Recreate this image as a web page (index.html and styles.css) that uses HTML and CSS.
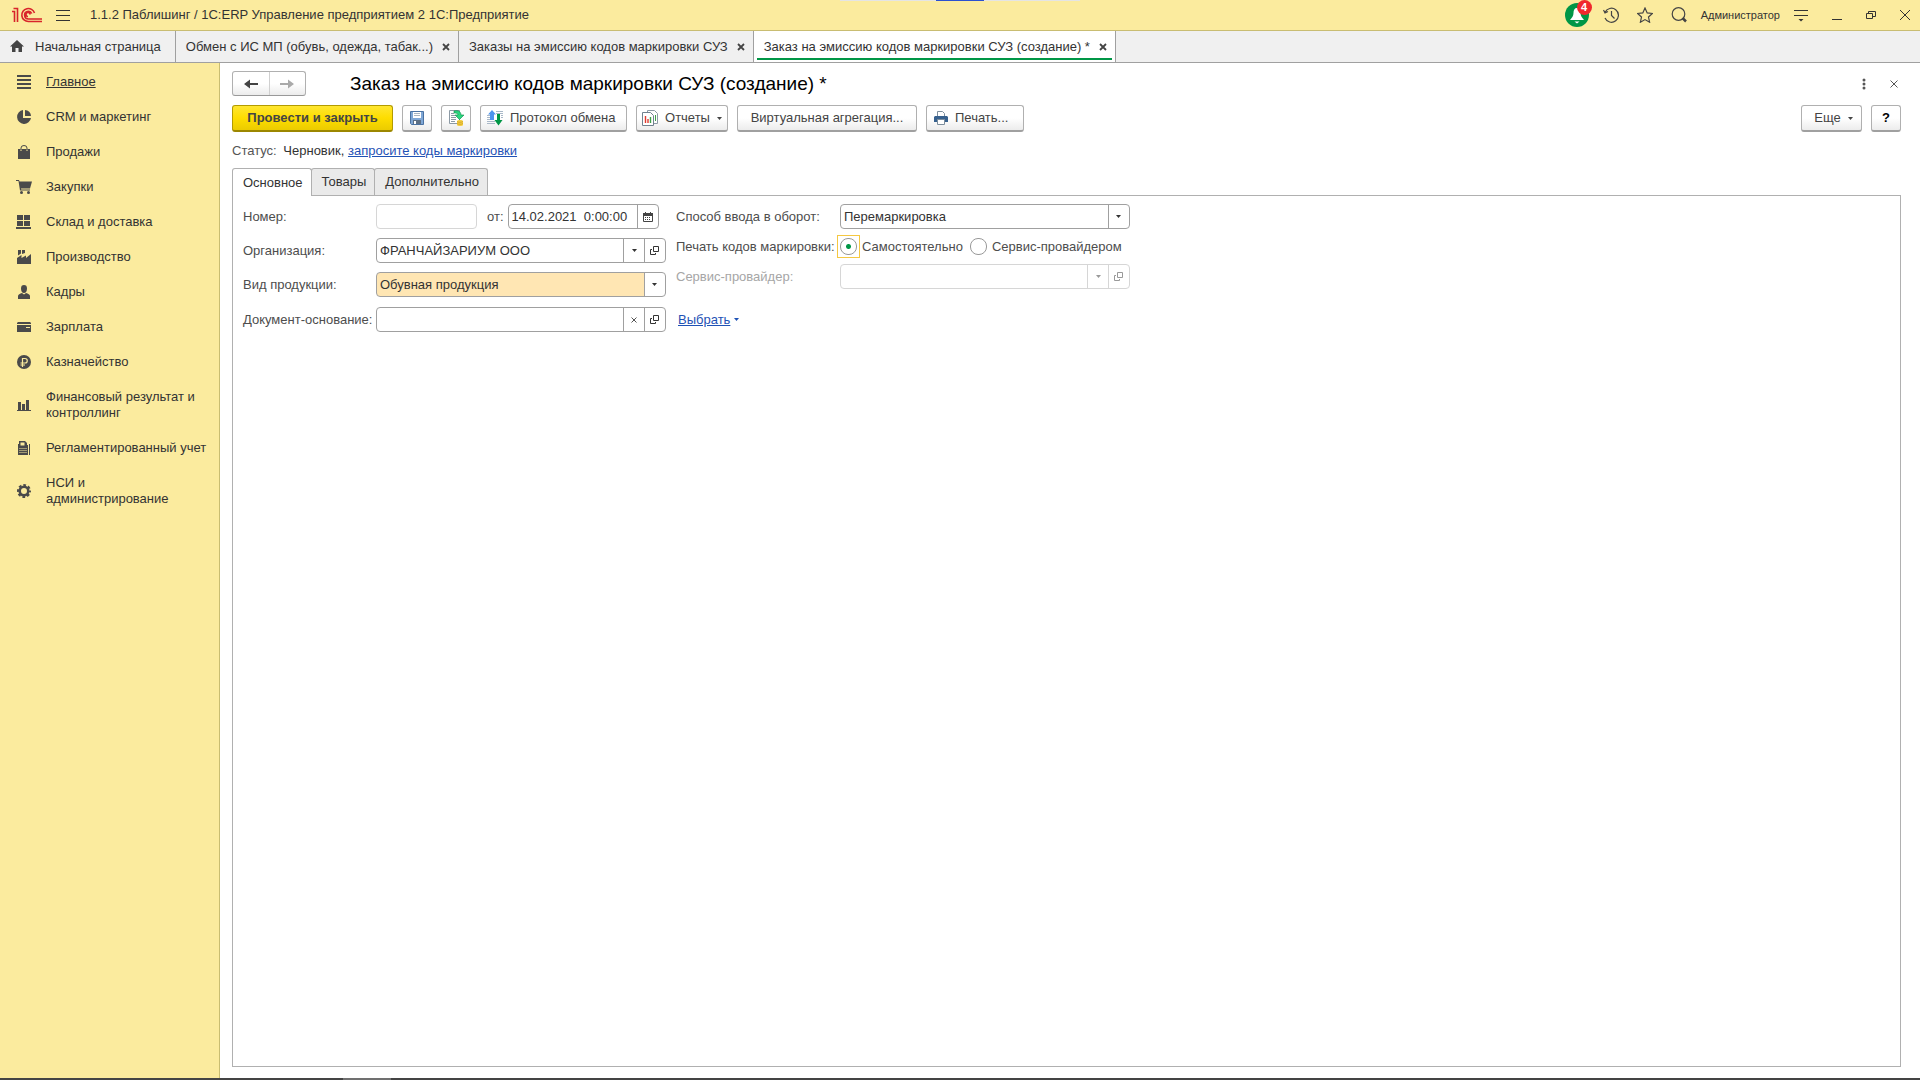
FILE: index.html
```
<!DOCTYPE html>
<html lang="ru">
<head>
    <meta charset="UTF-8">
    <title>Заказ на эмиссию кодов маркировки СУЗ (создание) *</title>
    <link rel="stylesheet" href="styles.css">
</head>
<body>

<svg class="sprite" aria-hidden="true">
    <symbol id="i-x" viewBox="0 0 10 10"><path d="M2 2l6 6M8 2l-6 6" fill="none" stroke="currentColor" stroke-width="1.800"/></symbol>
    <symbol id="i-down" viewBox="0 0 5 3"><path d="M0 0h5L2.500 3z" fill="currentColor"/></symbol>
    <symbol id="i-open" viewBox="0 0 10 10"><path d="M3.500 .5h5v5h-5zM2 3.500H.5v5h5V7" fill="none" stroke="currentColor"/></symbol>
</svg>

<!-- шапка -->
<header class="header">
    <svg class="logo" viewBox="0 0 30 16"><path d="M0 4.500h2.500V15M1.500 1.500h4V15M22.500 6a6.500 6.500 0 1 0-6 8.500H30M19.800 6.500a3.800 3.800 0 1 0-3.500 5.500H30M18 7.500a2 2 0 1 0-2 2" fill="none" stroke="#d8242b" stroke-width="1.600"/></svg>
    <button class="icon-btn menu" aria-label="Меню"><svg width="14" height="13" viewBox="0 0 14 13"><path d="M0 1h14M0 6h14M0 11h14" stroke="#333" shape-rendering="crispEdges"/></svg></button>
    <span class="app-name">1.1.2 Паблишинг / 1С:ERP Управление предприятием 2 1С:Предприятие</span>
    <div class="header-tools">
        <button class="icon-btn bell" aria-label="Уведомления">
            <svg width="24" height="24" viewBox="0 0 24 24"><circle cx="12" cy="12" r="12" fill="#009646"/><path d="M12 5c-2.500 0-3.500 2-3.500 5 0 3-1.500 4.500-3.500 7h14c-2-2.500-3.500-4-3.500-7 0-3-1-5-3.500-5zM9.500 18.500h5L12 20.500z" fill="#fff"/></svg>
            <span class="badge">4</span>
        </button>
        <button class="icon-btn" aria-label="История"><svg width="16" height="16" viewBox="0 0 16 16"><path d="M2 5.500A7 7 0 1 1 2 11M8.500 4v4.500l3 3M.5 3l1.500 3 3-1.500" fill="none" stroke="#444" stroke-width="1.200"/></svg></button>
        <button class="icon-btn" aria-label="Избранное"><svg width="16" height="16" viewBox="0 0 16 16"><path d="M8 1l2.200 4.900 5.200.6-3.900 3.500 1.100 5.200L8 12.600l-4.600 2.600L4.500 10 .6 6.500l5.200-.6z" fill="none" stroke="#444" stroke-width="1.200"/></svg></button>
        <button class="icon-btn" aria-label="Поиск"><svg width="16" height="16" viewBox="0 0 16 16"><circle cx="7.500" cy="7" r="6.300" fill="none" stroke="#444" stroke-width="1.200"/><path d="M11.500 11l3.500 3.500" stroke="#444" stroke-width="2.500"/></svg></button>
        <a class="user" href="#">Администратор</a>
        <button class="icon-btn settings" aria-label="Сервис"><svg width="14" height="13" viewBox="0 0 14 13"><path d="M0 1h14M0 6h14" stroke="#333" shape-rendering="crispEdges"/><path d="M4.500 10h5L7 12.500z" fill="#333"/></svg></button>
        <button class="icon-btn win" aria-label="Свернуть"><svg width="10" height="10" viewBox="0 0 10 10"><path d="M0 9.500h10" stroke="#333"/></svg></button>
        <button class="icon-btn win" aria-label="Развернуть"><svg width="10" height="10" viewBox="0 0 10 10"><path d="M.5 3.500h6v5h-6zM2.500 3V1.500h7v5H7" fill="none" stroke="#333"/></svg></button>
        <button class="icon-btn win" aria-label="Закрыть"><svg width="10" height="10" viewBox="0 0 10 10"><path d="M0 0l10 10M10 0L0 10" stroke="#333"/></svg></button>
    </div>
    <div class="screen-bar"></div>
</header>

<!-- открытые окна -->
<nav class="windows">
    <a class="window home" href="#"><svg width="14" height="13" viewBox="0 0 14 13"><path d="M7 0l7 6.500h-2V12H8.500V8h-3v4H2V6.500H0z" fill="#444"/></svg>Начальная страница</a>
    <div class="window"><a href="#">Обмен с ИС МП (обувь, одежда, табак...)</a><button class="icon-btn close" aria-label="Закрыть"><svg width="10" height="10"><use href="#i-x"/></svg></button></div>
    <div class="window"><a href="#">Заказы на эмиссию кодов маркировки СУЗ</a><button class="icon-btn close" aria-label="Закрыть"><svg width="10" height="10"><use href="#i-x"/></svg></button></div>
    <div class="window current"><a href="#">Заказ на эмиссию кодов маркировки СУЗ (создание) *</a><button class="icon-btn close" aria-label="Закрыть"><svg width="10" height="10"><use href="#i-x"/></svg></button></div>
</nav>

<div class="workspace">
    <!-- разделы -->
    <nav class="sections">
        <a class="active" href="#"><svg viewBox="0 0 14 14"><path d="M0 0h14v2H0zM0 4h14v2H0zM0 8h14v2H0zM0 12h14v2H0z"/></svg><span>Главное</span></a>
        <a href="#"><svg viewBox="0 0 14 14"><path d="M6 0v8h8a7 7 0 1 1-8-8zM8 0a6 6 0 0 1 6 6H8z"/></svg><span>CRM и маркетинг</span></a>
        <a href="#"><svg viewBox="0 0 14 14"><path d="M1 4h2.500v2h1V4h5v2h1V4H13v10H1z"/><path d="M4 5V3a3 2.500 0 0 1 6 0v2" fill="none" stroke="#4a4a4a"/></svg><span>Продажи</span></a>
        <a href="#"><svg viewBox="0 0 14 14"><path d="M-1 0h3l.5 1.500H15L13 8.500H4l.2 1H13v1H3L1.500 1H-1z"/><circle cx="4.500" cy="12.500" r="1.500"/><circle cx="11.500" cy="12.500" r="1.500"/></svg><span>Закупки</span></a>
        <a href="#"><svg viewBox="0 0 14 14"><path d="M0 0h6v5H0zM7 0h6v5H7zM0 6h6v5H0zM7 6h6v5H7zM-1 12h15v2H-1z"/></svg><span>Склад и доставка</span></a>
        <a href="#"><svg viewBox="0 0 14 14"><path d="M0 14V8l4.500-3v3L9 5.500V8l5-4v10zM1 0h3v3.500L1 5.500zM5 0h3v3L5 4z"/></svg><span>Производство</span></a>
        <a href="#"><svg viewBox="0 0 14 14"><path d="M7 0c2 0 3 1 3 3.500S9 8 7 8 4 6 4 3.500 5 0 7 0zM1 14v-3c0-1.500 2-2.500 4-3l2 1.500L9 8c2 .5 4 1.500 4 3v3z"/></svg><span>Кадры</span></a>
        <a href="#"><svg viewBox="0 0 14 14"><path d="M1 2h12l1 1v1H0V3zM0 5h14v7H0z"/><path d="M9 7.500h4" stroke="#fbeb9e"/></svg><span>Зарплата</span></a>
        <a href="#"><svg viewBox="0 0 14 14"><circle cx="7" cy="7" r="7"/><path d="M5.500 12V3.500h2.500a2 2 0 0 1 0 4.500H3.500M3.500 10H8" fill="none" stroke="#fbeb9e" stroke-width="1.200"/></svg><span>Казначейство</span></a>
        <a href="#"><svg viewBox="0 0 14 14"><path d="M1 4h3v8h1V6h3v6h1V2h3v10h2v1H0v-1h1z"/></svg><span>Финансовый результат и контроллинг</span></a>
        <a href="#"><svg viewBox="0 0 14 14"><path d="M2 0h6l2 2v2h1v10H1V3h1zM12 3h1v11h-1z"/><path d="M3.500 1.500h4v3h-4z" fill="#fbeb9e"/><path d="M2.500 7.500h7M2.500 9.500h7M2.500 11.500h7" fill="none" stroke="#fbeb9e" stroke-dasharray="1 1"/></svg><span>Регламентированный учет</span></a>
        <a href="#"><svg viewBox="0 0 14 14"><circle cx="7" cy="7" r="4.300" fill="none" stroke="#4a4a4a" stroke-width="2.600"/><circle cx="7" cy="7" r="6" fill="none" stroke="#4a4a4a" stroke-width="2" stroke-dasharray="2.710 2" stroke-dashoffset="1.350"/></svg><span>НСИ и администрирование</span></a>
    </nav>

    <main class="form">
        <div class="form-head">
            <div class="history">
                <button aria-label="Назад"><svg width="14" height="10" viewBox="0 0 14 10"><path d="M14 4v2H6v3.500L0 5 6 .5V4z" fill="#444"/></svg></button>
                <button aria-label="Вперед" disabled><svg width="14" height="10" viewBox="0 0 14 10"><path d="M0 4v2h8v3.500L14 5 8 .5V4z" fill="#aaa"/></svg></button>
            </div>
            <h1>Заказ на эмиссию кодов маркировки СУЗ (создание) *</h1>
            <button class="icon-btn more" aria-label="Действия"><svg width="4" height="12" viewBox="0 0 4 12"><circle cx="2" cy="2" r="1.500" fill="#555"/><circle cx="2" cy="6" r="1.500" fill="#555"/><circle cx="2" cy="10" r="1.500" fill="#555"/></svg></button>
            <button class="icon-btn" aria-label="Закрыть"><svg width="8" height="8" viewBox="0 0 8 8"><path d="M.5 .5l7 7M7.500 .5l-7 7" stroke="#555"/></svg></button>
        </div>

        <div class="toolbar">
            <button class="btn btn-main">Провести и закрыть</button>
            <button class="btn btn-icon" aria-label="Записать"><svg width="16" height="16" viewBox="0 0 16 16"><path d="M1.500 1.500h13v13h-12l-1-1z" fill="#7fa7d6" stroke="#4a72a3"/><path d="M4 2h8v6H4z" fill="#fff"/><path d="M5 3.500h6M5 5.500h6" stroke="#a9b4c0"/><path d="M4 10h8v4H4z" fill="#5c6f85"/><path d="M5 11h2v3H5z" fill="#fff"/></svg></button>
            <button class="btn btn-icon" aria-label="Провести"><svg width="16" height="16" viewBox="0 0 16 16"><path d="M1.500 .5h10v13h-10z" fill="#fff" stroke="#8d9aa5"/><path d="M3 3.500h3M3 5.500h4M3 7.500h5M3 9.500h5M3 11.500h4" stroke="#8d9aa5"/><path d="M6 1c4-1 7 .5 7 4h3l-4.500 4.500L7 5h3c0-1.500-1-2-4-2z" fill="#2bd67f" stroke="#078c46" stroke-width=".6"/><path d="M9 11c0-1.500 6-1.500 6 0v4c0 1.300-6 1.300-6 0z" fill="#f5cf45"/><path d="M9 11.500c1 1 5 1 6 0M9 13.500c1 1 5 1 6 0" fill="none" stroke="#c79a18" stroke-width=".7"/></svg></button>
            <button class="btn btn-protocol"><svg width="16" height="16" viewBox="0 0 16 16"><path d="M0 5.500h3M0 7.500h3M0 9.500h3M0 11.500h8M0 13.500h8M9 1.500h7M9 3.500h7M14 5.500h2M14 7.500h2" stroke="#a9b8c8"/><path d="M5 0l4 4.500H7V10H3V4.500H1z" fill="#4d94ee"/><path d="M10 4h3v6h2.500l-4 5.500L7.500 10H10z" fill="#009646"/></svg>Протокол обмена</button>
            <button class="btn btn-reports"><svg width="16" height="16" viewBox="0 0 16 16"><path d="M5.500.5h7l3 3v10h-10z" fill="#fff" stroke="#8d9aa5"/><path d="M13.500 5v6" stroke="#3fa34a"/><path d="M.5 2.500h8l3 3v10H.5z" fill="#fff" stroke="#71818f"/><path d="M3.500 6v7M6 9v4" stroke="#e03a2f" stroke-width="1.400"/><path d="M8.500 7v6" stroke="#3fa34a" stroke-width="1.400"/></svg>Отчеты<svg class="arrow"><use href="#i-down"/></svg></button>
            <button class="btn btn-text">Виртуальная агрегация...</button>
            <button class="btn btn-print"><svg width="14" height="14" viewBox="0 0 14 14"><path d="M3.500 6V.5h5l2 2V6" fill="#fff" stroke="#7d8e9d"/><path d="M1 5h12l1 1v5H0V6z" fill="#37618e"/><path d="M3.500 8.500h7v5h-7z" fill="#fff" stroke="#7d8e9d"/></svg>Печать...</button>
            <button class="btn btn-else">Еще<svg class="arrow"><use href="#i-down"/></svg></button>
            <button class="btn btn-help">?</button>
        </div>

        <p class="status">Статус: <span>Черновик,</span> <a href="#">запросите коды маркировки</a></p>

        <div class="tabs" role="tablist">
            <button class="tab selected" role="tab" aria-selected="true">Основное</button>
            <button class="tab" role="tab">Товары</button>
            <button class="tab" role="tab">Дополнительно</button>
        </div>

        <div class="page">
            <div class="column">
                <div class="row">
                    <label for="number">Номер:</label>
                    <div class="field field-number disabled"><input id="number" type="text" disabled></div>
                    <label class="label-from" for="date">от:</label>
                    <div class="field field-date"><input id="date" type="text" value="14.02.2021  0:00:00"><button aria-label="Выбрать дату"><svg width="10" height="10" viewBox="0 0 10 10"><path d="M.5 1.500h9v8h-9z" fill="#fff" stroke="#444"/><path d="M0 1h2V0h1v1h4V0h1v1h2v3H0z" fill="#444"/><path d="M2 5.500h6M2 7.500h6" stroke="#444" stroke-dasharray="1 1"/></svg></button></div>
                </div>
                <div class="row">
                    <label for="org">Организация:</label>
                    <div class="field"><input id="org" type="text" value="ФРАНЧАЙЗАРИУМ ООО"><button aria-label="Список"><svg class="arrow"><use href="#i-down"/></svg></button><button aria-label="Открыть"><svg width="10" height="10"><use href="#i-open"/></svg></button></div>
                </div>
                <div class="row">
                    <label for="kind">Вид продукции:</label>
                    <div class="field field-select marked"><select id="kind"><option>Обувная продукция</option></select><svg class="arrow"><use href="#i-down"/></svg></div>
                </div>
                <div class="row row-base">
                    <label for="base">Документ-основание:</label>
                    <div class="field"><input id="base" type="text"><button aria-label="Очистить"><svg width="6" height="6" viewBox="0 0 6 6"><path d="M.5 .5l5 5M5.500 .5l-5 5" stroke="#555"/></svg></button><button aria-label="Открыть"><svg width="10" height="10"><use href="#i-open"/></svg></button></div>
                </div>
            </div>

            <div class="column column-right">
                <div class="row">
                    <label for="way">Способ ввода в оборот:</label>
                    <div class="field field-select"><select id="way"><option>Перемаркировка</option></select><svg class="arrow"><use href="#i-down"/></svg></div>
                </div>
                <div class="row row-radio" role="radiogroup" aria-labelledby="print-label">
                    <span class="caption" id="print-label">Печать кодов маркировки:</span>
                    <label class="radio focused"><input type="radio" name="print" checked><span>Самостоятельно</span></label>
                    <label class="radio"><input type="radio" name="print"><span>Сервис-провайдером</span></label>
                </div>
                <div class="row row-provider">
                    <label for="provider">Сервис-провайдер:</label>
                    <div class="field disabled"><input id="provider" type="text" disabled><button aria-label="Список" disabled><svg class="arrow"><use href="#i-down"/></svg></button><button aria-label="Открыть" disabled><svg width="10" height="10"><use href="#i-open"/></svg></button></div>
                </div>
                <div class="row row-choose">
                    <a class="choose" href="#">Выбрать</a><svg class="arrow"><use href="#i-down"/></svg>
                </div>
            </div>
        </div>
    </main>
</div>

<footer class="taskbar"><span></span></footer>

</body>
</html>
```

FILE: styles.css
```
* {
    box-sizing: border-box;
}

body {
    display: flex;
    flex-direction: column;
    min-height: 100vh;
    margin: 0;
    font: 13px/16px "Liberation Sans", Arial, sans-serif;
    color: #333;
    background-color: #fff;
}

button, input, select {
    font: inherit;
    color: inherit;
}

a {
    color: inherit;
    text-decoration: none;
}

svg {
    flex: none;
    display: block;
}

.sprite {
    position: absolute;
    width: 0;
    height: 0;
}

.arrow {
    width: 5px;
    height: 3px;
}

.icon-btn {
    display: flex;
    align-items: center;
    justify-content: center;
    padding: 0;
    border: none;
    background: none;
}

/* шапка */
.header {
    position: relative;
    display: flex;
    align-items: center;
    height: 31px;
    padding: 0 10px 0 12px;
    background-color: #fbeb9e;
    border-bottom: 1px solid #c9bd72;
}

.logo {
    width: 30px;
    height: 16px;
}

.menu {
    margin: 0 20px 0 14px;
}

.header-tools {
    display: flex;
    align-items: center;
    gap: 18px;
    margin-left: auto;
}

.bell {
    position: relative;
    margin-right: -4px;
}

.badge {
    position: absolute;
    top: -3px;
    right: -3px;
    width: 15px;
    height: 15px;
    border-radius: 8px;
    font-size: 11px;
    font-weight: bold;
    line-height: 15px;
    color: #fff;
    background-color: #f0282d;
}

.user {
    margin: 0 -4px;
    font-size: 11px;
}

.win {
    width: 10px;
    margin-left: 6px;
}

.screen-bar {
    position: absolute;
    top: 0;
    left: 840px;
    width: 240px;
    height: 1px;
    background: linear-gradient(to right, #e4e4e4 96px, #2b50d0 96px, #2b50d0 144px, #e4e4e4 144px);
}

/* открытые окна */
.windows {
    display: flex;
    height: 32px;
    background-color: #f0f0f0;
    border-bottom: 1px solid #a0a0a0;
}

.window {
    display: flex;
    align-items: center;
    gap: 8px;
    padding: 0 7px 0 10px;
    border-right: 1px solid #a0a0a0;
}

.home {
    gap: 11px;
    padding-right: 14px;
}

.close {
    color: #444;
}

.current {
    background: linear-gradient(#009646, #009646) center bottom 2px / calc(100% - 6px) 2px no-repeat #fff;
}

/* разделы */
.workspace {
    display: flex;
    flex: 1;
}

.sections {
    width: 220px;
    padding-top: 1px;
    background-color: #fbeb9e;
    border-right: 1px solid #c9bd72;
}

.sections a {
    display: flex;
    align-items: center;
    gap: 15px;
    padding: 10px 8px 9px 17px;
}

.sections svg {
    width: 14px;
    height: 14px;
    overflow: visible;
    fill: #4a4a4a;
}

.active span {
    text-decoration: underline;
}

/* форма */
.form {
    display: flex;
    flex: 1;
    flex-direction: column;
    padding: 8px 19px 11px 12px;
}

.form-head {
    display: flex;
    align-items: center;
    gap: 24px;
    height: 25px;
    padding-right: 3px;
}

.history {
    display: flex;
    width: 74px;
    height: 25px;
    border: 1px solid #b0b0b0;
    border-bottom-color: #999;
    border-radius: 3px;
    background: linear-gradient(#fff 50%, #ececec);
}

.history button {
    display: flex;
    flex: 1;
    align-items: center;
    justify-content: center;
    padding: 0;
    border: none;
    background: none;
}

.history button + button {
    border-left: 1px solid #d0d0d0;
}

h1 {
    flex: 1;
    margin: 0;
    padding-left: 20px;
    font-size: 19px;
    font-weight: normal;
    line-height: 22px;
    color: #000;
}

.toolbar {
    display: flex;
    gap: 9px;
    margin-top: 9px;
}

.btn {
    display: flex;
    align-items: center;
    justify-content: center;
    gap: 7px;
    height: 27px;
    padding: 0 12px;
    border: 1px solid #b0b0b0;
    border-bottom: 2px solid #a0a0a0;
    border-radius: 3px;
    color: #444;
    background: linear-gradient(#fff 50%, #ececec);
}

.btn-main {
    width: 161px;
    font-weight: bold;
    border-color: #b39b00;
    border-bottom-color: #9c8700;
    background: linear-gradient(#ffe631, #fedd00 50%, #ebcb00);
}

.btn-icon, .btn-help {
    width: 30px;
    padding: 0;
}

.btn-protocol {
    justify-content: flex-start;
    width: 147px;
    padding: 0 6px;
}

.btn-reports {
    width: 92px;
    padding: 0;
}

.btn-text {
    width: 180px;
}

.btn-print {
    justify-content: flex-start;
    width: 98px;
    padding: 0 7px;
}

.btn-else {
    width: 61px;
    padding-right: 8px;
    margin-left: auto;
}

.btn-help {
    font-weight: bold;
    color: #000;
}

.status {
    margin: 11px 0 9px;
    color: #555;
}

.status span {
    margin-left: 3px;
    color: #333;
}

.status a, .choose {
    color: #1f52b5;
    text-decoration: underline;
}

/* закладки */
.tabs {
    display: flex;
    height: 27px;
}

.tab {
    padding: 0 8px 0 10px;
    margin-right: -1px;
    border: 1px solid #b0b0b0;
    border-bottom: none;
    border-radius: 3px 3px 0 0;
    background-color: #eaeaea;
}

.selected {
    z-index: 1;
    margin-bottom: -1px;
    background-color: #fff;
}

.page {
    display: flex;
    flex: 1;
    align-items: flex-start;
    gap: 10px;
    padding: 8px 10px;
    border: 1px solid #b0b0b0;
}

.column {
    display: flex;
    flex-direction: column;
    gap: 9px;
    width: 423px;
}

.column-right {
    gap: 6px;
    width: 454px;
}

.row {
    display: flex;
    align-items: center;
    height: 25px;
    color: #4d4d4d;
}

.row > label:first-child, .caption {
    flex: none;
    width: 133px;
    white-space: nowrap;
}

.column-right .row > label:first-child, .caption {
    width: 164px;
}

.row .label-from {
    margin: 0 4px 0 10px;
}

.row-base {
    margin-top: 1px;
}

.field {
    display: flex;
    flex: 1;
    height: 25px;
    border: 1px solid #a0a0a0;
    border-radius: 4px;
    overflow: hidden;
    color: #333;
    background-color: #fff;
}

.field input {
    flex: 1;
    min-width: 0;
    padding: 0 3px;
    border: none;
    background: none;
    white-space: pre;
}

.field button {
    display: flex;
    align-items: center;
    justify-content: center;
    width: 21px;
    padding: 0;
    border: none;
    border-left: 1px solid #a0a0a0;
    background: none;
}

.field.field-number {
    flex: none;
    width: 101px;
}

.field.field-date {
    flex: none;
    width: 151px;
}

.field-select {
    position: relative;
}

.field-select select {
    flex: 1;
    padding: 0 3px;
    border: none;
    appearance: none;
    background: linear-gradient(#a0a0a0, #a0a0a0) right 20px top / 1px 100% no-repeat;
}

.field-select .arrow {
    position: absolute;
    top: 10px;
    right: 8px;
    pointer-events: none;
}

.marked {
    background: linear-gradient(to left, #fff 20px, #ffe6b3 20px);
}

.field.disabled, .disabled button {
    border-color: #d6d6d6;
    color: #999;
}

.row-radio {
    height: 23px;
}

.radio {
    display: flex;
    align-items: center;
    gap: 2px;
}

.radio + .radio {
    margin-left: 4px;
}

.radio input {
    display: grid;
    place-items: center;
    appearance: none;
    width: 23px;
    height: 23px;
    margin: 0;
    border: 1px solid transparent;
}

.radio input::before {
    content: "";
    width: 15px;
    height: 15px;
    border: 1px solid #999;
    border-radius: 8px;
    background-color: #fff;
}

.radio input:checked::before {
    background: radial-gradient(#009646 2px, #fff 3px);
}

.focused {
    margin-left: -3px;
}

.radio.focused input {
    border-color: #f5c842;
}

.row-provider > label {
    color: #a6a6a6;
}

.row-choose {
    gap: 4px;
    margin-top: 12px;
    padding-left: 2px;
    color: #1f52b5;
}

/* полоса панели задач */
.taskbar {
    height: 2px;
    background-color: #444;
}

.taskbar span {
    display: block;
    width: 48px;
    height: 2px;
    margin-left: 343px;
    background-color: #707070;
}
```
